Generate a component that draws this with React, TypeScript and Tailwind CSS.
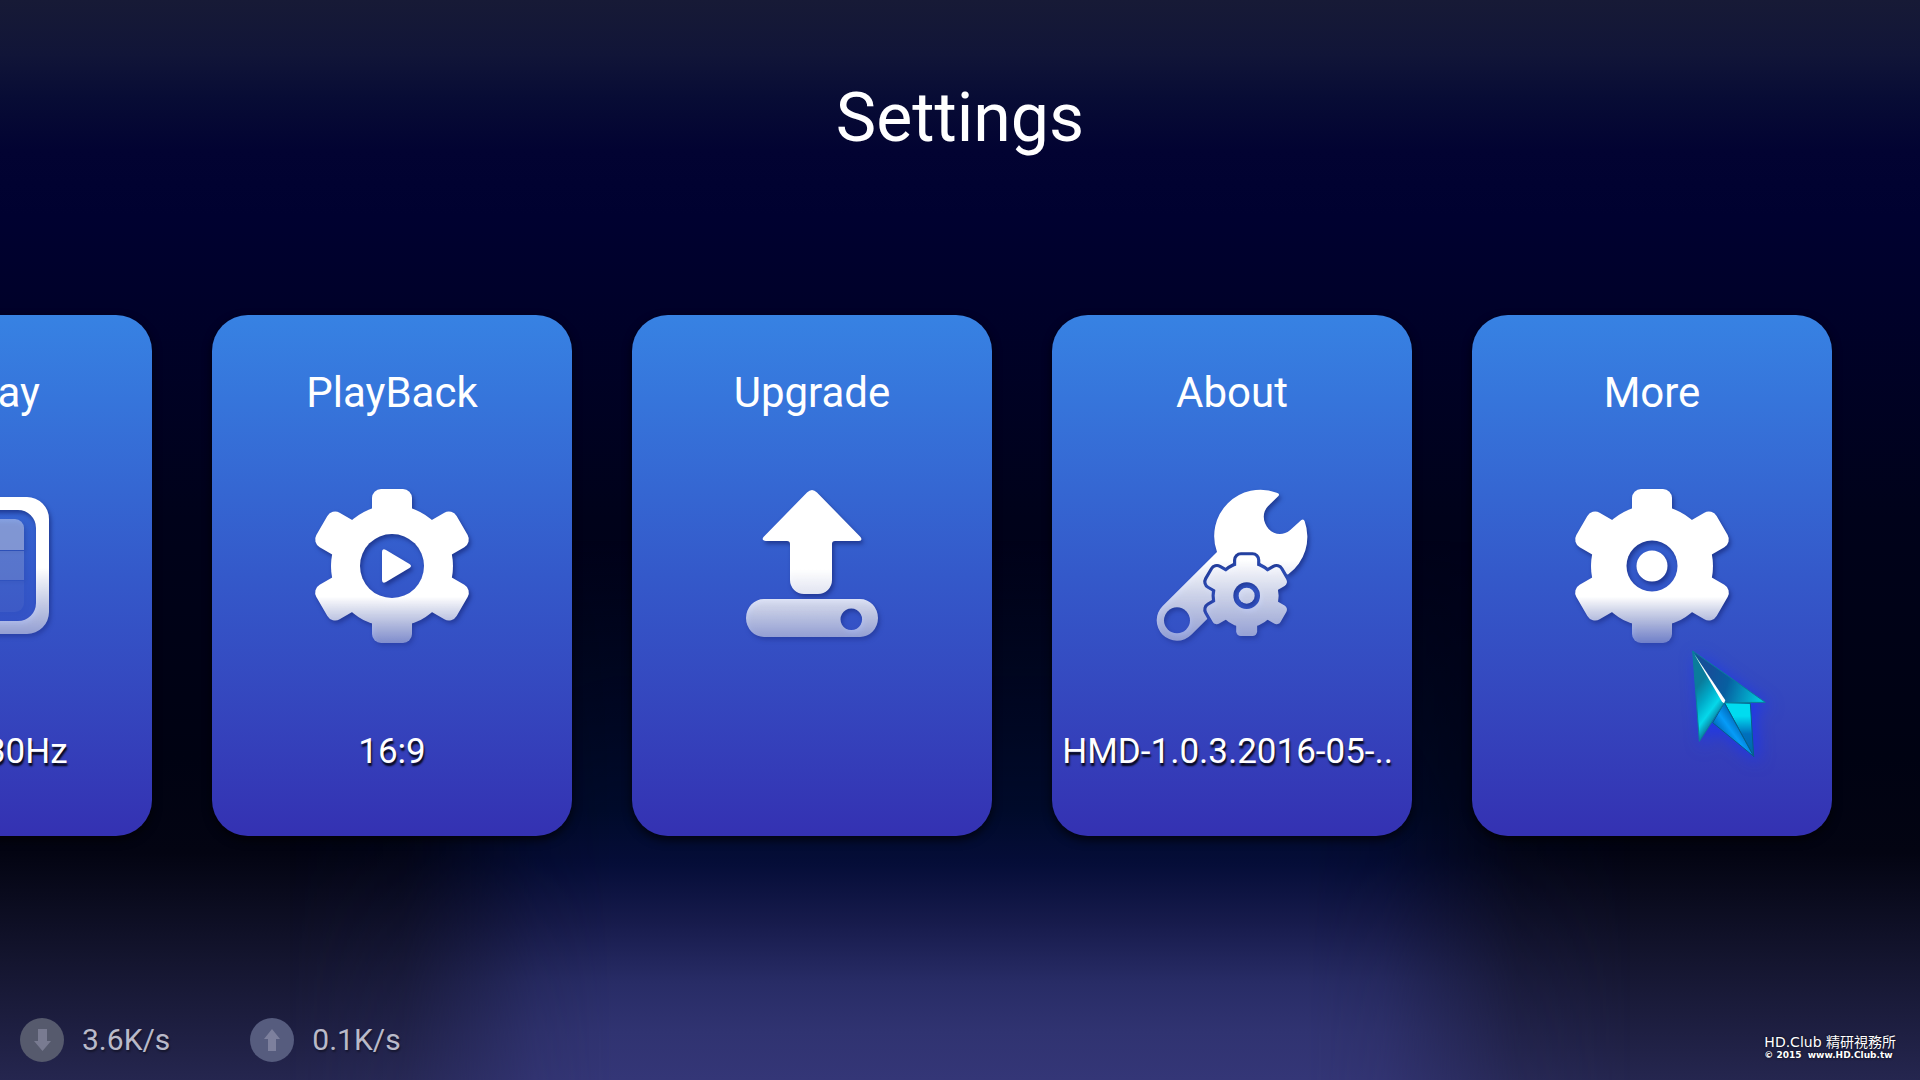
import type { ReactNode } from 'react'

interface Setting {
  id: string
  title: string
  value?: string
  icon: ReactNode
}

const SIDE_TEETH = [60, 120, 240, 300]

function GearBody() {
  return (
    <>
      <circle r="61" />
      <rect x="-20" y="-77" width="40" height="154" rx="9" />
      {SIDE_TEETH.map((angle) => (
        <rect key={angle} x="-20" y="-81" width="40" height="60" rx="9" transform={`rotate(${angle})`} />
      ))}
    </>
  )
}

function IconFrame({ children }: { children: ReactNode }) {
  return (
    <svg
      viewBox="-96 -96 192 192"
      className="size-48 overflow-visible drop-shadow-[2px_3px_2px_rgba(10,20,90,0.5)]"
      aria-hidden="true"
    >
      {children}
    </svg>
  )
}

function GearIcon({ id, hole, fade, children }: { id: string; hole: number; fade: number; children: ReactNode }) {
  return (
    <IconFrame>
      <defs>
        <linearGradient id={`${id}-fade`} gradientUnits="userSpaceOnUse" x1="0" y1="-77" x2="0" y2="77">
          <stop offset="0.7" stopColor="#fff" />
          <stop offset="1" stopColor="#fff" stopOpacity={fade} />
        </linearGradient>
        <mask id={`${id}-mask`} maskUnits="userSpaceOnUse" x="-96" y="-96" width="192" height="192">
          <g fill="#fff">
            <GearBody />
          </g>
          <circle r={hole} fill="#000" />
        </mask>
      </defs>
      <rect x="-80" y="-80" width="160" height="160" fill={`url(#${id}-fade)`} mask={`url(#${id}-mask)`} />
      {children}
    </IconFrame>
  )
}

function DisplayIcon() {
  return (
    <IconFrame>
      <defs>
        <linearGradient id="display-fade" gradientUnits="userSpaceOnUse" x1="0" y1="-69" x2="0" y2="68">
          <stop offset="0.52" stopColor="#fff" />
          <stop offset="1" stopColor="#fff" stopOpacity="0.5" />
        </linearGradient>
      </defs>
      <path
        fill="url(#display-fade)"
        fillRule="evenodd"
        d="M-55-69H55a22 22 0 0 1 22 22V46a22 22 0 0 1-22 22H-55a22 22 0 0 1-22-22V-47a22 22 0 0 1 22-22ZM-46-56a18 18 0 0 0-18 18V37a18 18 0 0 0 18 18H46a18 18 0 0 0 18-18V-38a18 18 0 0 0-18-18Z"
      />
      <path fill="#fff" fillOpacity="0.4" d="M-43-47H43a9 9 0 0 1 9 9V-16H-52V-38a9 9 0 0 1 9-9Z" />
      <path fill="#fff" fillOpacity="0.2" d="M-52-15H52V14H-52Z" />
      <path fill="#fff" fillOpacity="0.05" d="M-52 15H52V37a9 9 0 0 1-9 9H-43a9 9 0 0 1-9-9Z" />
    </IconFrame>
  )
}

function UpgradeIcon() {
  return (
    <IconFrame>
      <defs>
        <linearGradient id="upgrade-fade" gradientUnits="userSpaceOnUse" x1="0" y1="-76" x2="0" y2="71">
          <stop offset="0.54" stopColor="#fff" />
          <stop offset="0.72" stopColor="#fff" stopOpacity="0.86" />
          <stop offset="1" stopColor="#fff" stopOpacity="0.5" />
        </linearGradient>
      </defs>
      <path
        fill="url(#upgrade-fade)"
        d="M-5-73.5Q0-78.500 5-73.500L48.500-29Q51-25.500 47-25H23Q20-25 20-22V14A14 14 0 0 1 6 28H-8A14 14 0 0 1-22 14V-22Q-22-25-25-25H-46Q-51-25.500-48.500-29Z"
      />
      <path
        fill="url(#upgrade-fade)"
        fillRule="evenodd"
        d="M-48 33H48a18 19 0 0 1 0 38H-48a18 19 0 0 1 0-38ZM39.300 42.500a10.800 10.800 0 1 0 .01 0Z"
      />
    </IconFrame>
  )
}

function AboutIcon() {
  return (
    <IconFrame>
      <defs>
        <linearGradient id="about-fade" gradientUnits="userSpaceOnUse" x1="0" y1="62" x2="0" y2="513">
          <stop offset="0.46" stopColor="#fff" />
          <stop offset="1" stopColor="#fff" stopOpacity="0.48" />
        </linearGradient>
        <mask id="about-wrench" maskUnits="userSpaceOnUse" x="0" y="0" width="570" height="570">
          <path
            fill="#fff"
            d="M231 246A139 139 0 0 1 410 68Q420 70 416 77L384 109C364 130 370 160 386 177C404 196 430 197 450 181L484 150Q491 145 494 154A139 139 0 0 1 445 313L320 340Z"
          />
          <path stroke="#fff" strokeWidth="122" strokeLinecap="round" d="M111 451L280 283" />
          <circle cx="111" cy="451" r="39" fill="#000" />
          <g transform="translate(320 377) scale(1.572)" fill="#000" stroke="#000" strokeWidth="12" strokeLinejoin="round">
            <GearBody />
          </g>
        </mask>
        <mask id="about-gear" maskUnits="userSpaceOnUse" x="0" y="0" width="570" height="570">
          <g transform="translate(320 377) scale(1.572)" fill="#fff">
            <GearBody />
          </g>
          <circle cx="320" cy="377" r="40" fill="#000" />
          <circle cx="320" cy="377" r="24" fill="#fff" />
        </mask>
      </defs>
      <g transform="translate(-92 -96) scale(0.33333)">
        <rect width="570" height="570" fill="url(#about-fade)" mask="url(#about-wrench)" />
        <rect width="570" height="570" fill="url(#about-fade)" mask="url(#about-gear)" />
      </g>
    </IconFrame>
  )
}

function Pointer() {
  return (
    <svg
      viewBox="360 510 300 390"
      className="pointer-events-none absolute top-[326px] left-52 h-[130px] w-[100px] overflow-visible drop-shadow-[4px_5px_8px_rgba(20,50,255,0.7)]"
      aria-hidden="true"
    >
      <defs>
        <linearGradient id="ptr-left" gradientUnits="userSpaceOnUse" x1="395" y1="670" x2="475" y2="730">
          <stop offset="0" stopColor="#0a7c9c" />
          <stop offset="0.4" stopColor="#00aac8" />
          <stop offset="0.75" stopColor="#05d8ea" />
          <stop offset="1" stopColor="#0a88a8" />
        </linearGradient>
        <linearGradient id="ptr-right" gradientUnits="userSpaceOnUse" x1="440" y1="640" x2="600" y2="690">
          <stop offset="0" stopColor="#14509a" />
          <stop offset="0.35" stopColor="#075fa0" />
          <stop offset="1" stopColor="#00c8dc" />
        </linearGradient>
        <linearGradient id="ptr-tail" gradientUnits="userSpaceOnUse" x1="480" y1="790" x2="535" y2="750">
          <stop offset="0" stopColor="#0068b8" />
          <stop offset="0.5" stopColor="#069cf8" />
          <stop offset="1" stopColor="#0068b8" />
        </linearGradient>
        <linearGradient id="ptr-flap" gradientUnits="userSpaceOnUse" x1="0" y1="697" x2="0" y2="850">
          <stop offset="0.25" stopColor="#00dcf0" />
          <stop offset="0.6" stopColor="#0070bd" />
          <stop offset="1" stopColor="#0068a8" />
        </linearGradient>
      </defs>
      <g stroke="#075f86" strokeWidth="3" strokeLinejoin="round">
        <path fill="url(#ptr-flap)" d="M493 695L571 697L581 856Z" />
        <path fill="url(#ptr-tail)" d="M493 695L581 856L458 755Z" />
        <path fill="url(#ptr-left)" stroke="#0a7f9c" d="M398 540L493 695L418 811Z" />
        <path fill="url(#ptr-right)" stroke="#0a7f9c" d="M398 540L616 694L493 695Z" />
      </g>
      <path fill="#fff" d="M402 548L496 688L492 697L486 692Z" />
    </svg>
  )
}

const settings: Setting[] = [
  { id: 'display', title: 'Display', value: '2160P 30Hz', icon: <DisplayIcon /> },
  {
    id: 'playback',
    title: 'PlayBack',
    value: '16:9',
    icon: (
      <GearIcon id="playback" hole={32} fade={0.4}>
        <path fill="#fff" d="M-10-14Q-10-18-6-16L17.500-2Q20.500 0 17.500 2L-6 16Q-10 18-10 14Z" />
      </GearIcon>
    ),
  },
  { id: 'upgrade', title: 'Upgrade', icon: <UpgradeIcon /> },
  { id: 'about', title: 'About', value: 'HMD-1.0.3.2016-05-.. ', icon: <AboutIcon /> },
  {
    id: 'more',
    title: 'More',
    icon: (
      <GearIcon id="more" hole={25.5} fade={0.32}>
        <circle r="15.500" fill="#fff" />
      </GearIcon>
    ),
  },
]

function SettingCard({ setting }: { setting: Setting }) {
  return (
    <li className="relative shrink-0">
      <button
        type="button"
        className="flex h-[521px] w-[360px] flex-col items-center rounded-[36px] bg-linear-to-b from-[#3782e3] via-[#3459ca] to-[#3431b2] pt-12 shadow-[0_4px_10px_rgba(0,0,0,0.7)]"
      >
        <span className="text-[42px] leading-[60px]">{setting.title}</span>
        <span className="mt-[47px]">{setting.icon}</span>
        <span className="mt-[66px] text-[35px] leading-[48px] whitespace-pre text-shadow-[1px_3px_2px_rgba(0,0,0,0.9)]">
          {setting.value}
        </span>
      </button>
      {setting.id === 'more' && <Pointer />}
    </li>
  )
}

function Speed({ direction, value }: { direction: 'down' | 'up'; value: string }) {
  const down = direction === 'down'
  return (
    <div className="flex items-center gap-[18px]">
      <svg viewBox="0 0 44 44" className="size-11" role="img" aria-label={down ? 'Download' : 'Upload'}>
        <circle cx="22" cy="22" r="22" fill={down ? '#565a6d' : '#565c7e'} />
        <path
          fill={down ? '#797b91' : '#7d809d'}
          d={down ? 'M18 11H27V23H31L22.500 33L14 23H18Z' : 'M18 33H26V21H30L22 11L14 21H18Z'}
        />
      </svg>
      <span className="text-[30px] leading-10 text-[#b9bac9] text-shadow-[1px_2px_2px_rgba(0,0,0,0.4)]">{value}</span>
    </div>
  )
}

export default function App() {
  return (
    <div className="relative isolate flex min-h-screen flex-col overflow-hidden bg-[linear-gradient(to_bottom,#171a36_0%,#111538_5%,#080c35_9%,#020332_14%,#000130_20%,#00012a_28%,#00021a_48%,#000212_70%,#030412_79%,#14152f_89%,#25264f_100%)] font-[Roboto,'Noto_Sans_CJK_TC',sans-serif] text-white">
      <div className="absolute inset-x-0 bottom-0 -z-10 h-1/2 bg-[linear-gradient(to_bottom,transparent_0%,#000a2a_50%,#050d38_60%,#171b4c_71%,#282c66_82%,#303371_91%,#343677_100%)] mask-[linear-gradient(to_right,transparent_15%,rgba(0,0,0,0.15)_21%,rgba(0,0,0,0.85)_28%,black_32%,black_68%,rgba(0,0,0,0.85)_72%,rgba(0,0,0,0.15)_79%,transparent_85%)]" />

      <header className="pt-[78px] pb-[157px] text-center">
        <h1 className="text-[68px] leading-[80px]">Settings</h1>
      </header>

      <main className="flex-1">
        <ul className="flex justify-end gap-15 pr-22">
          {settings.map((setting) => (
            <SettingCard key={setting.id} setting={setting} />
          ))}
        </ul>
      </main>

      <footer className="flex items-end justify-between pr-6 pb-[18px] pl-5">
        <div className="flex gap-20">
          <Speed direction="down" value="3.6K/s" />
          <Speed direction="up" value="0.1K/s" />
        </div>
        <div className="pb-0.5 font-['DejaVu_Sans','Noto_Sans_CJK_TC',sans-serif] text-shadow-[0_0_3px_rgba(0,0,0,0.8)]">
          <p className="text-[14px] leading-[16px]">HD.Club 精研視務所</p>
          <p className="text-[9px] leading-[10px] font-bold whitespace-pre">{'© 2015  www.HD.Club.tw'}</p>
        </div>
      </footer>
    </div>
  )
}
